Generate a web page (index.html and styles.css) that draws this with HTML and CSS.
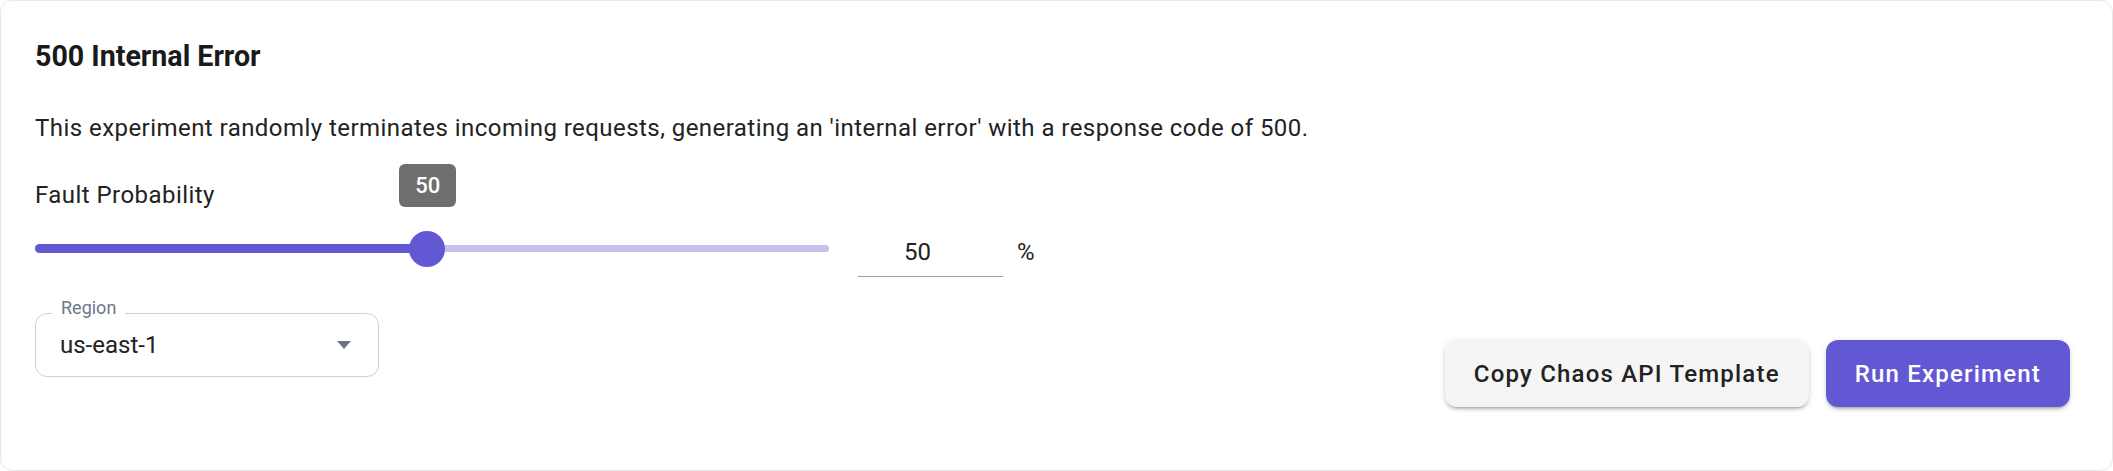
FILE: index.html
```html
<!DOCTYPE html>
<html lang="en">
<head>
<meta charset="utf-8">
<title>500 Internal Error</title>
<link rel="stylesheet" href="styles.css">
</head>
<body>
<div class="card">
  <h2 class="title">500 Internal Error</h2>
  <p class="desc">This experiment randomly terminates incoming requests, generating an 'internal error' with a response code of 500.</p>
  <div class="field-label">Fault Probability</div>
  <div class="slider-row">
    <div class="slider">
      <div class="rail"></div>
      <div class="track" style="width: 49.4%"></div>
      <div class="thumb" style="left: 49.4%"></div>
      <div class="value-label" style="left: 49.4%">50</div>
    </div>
    <div class="value-field">
      <input class="value-input" type="text" value="50">
      <span class="unit">%</span>
    </div>
  </div>
  <div class="bottom-row">
    <div class="select">
      <span class="select-label">Region</span>
      <span class="select-value">us-east-1</span>
      <svg class="select-arrow" width="14" height="8" viewBox="0 0 14 8"><path d="M0 0H14L7 8Z" fill="#6b7785"/></svg>
    </div>
    <div class="actions">
      <button class="btn btn-secondary">Copy Chaos API Template</button>
      <button class="btn btn-primary">Run Experiment</button>
    </div>
  </div>
</div>
</body>
</html>
```
FILE: styles.css
```css
html, body {
  margin: 0;
  padding: 0;
  background: #ffffff;
}

body {
  font-family: Roboto, "Liberation Sans", Arial, sans-serif;
  color: #222222;
}

.card {
  box-sizing: border-box;
  width: 2113px;
  height: 471px;
  border: 1px solid #e8e8e8;
  border-radius: 12px;
  padding: 38px 42px 0 34px;
  overflow: hidden;
}

.title {
  margin: 0;
  font-size: 28.6px;
  line-height: 34px;
  font-weight: 700;
  color: #1a1a1a;
}

.desc {
  margin: 39px 0 0;
  font-size: 24px;
  line-height: 32px;
  letter-spacing: 0.45px;
  color: #222222;
}

.field-label {
  margin-top: 35px;
  font-size: 24px;
  line-height: 32px;
  letter-spacing: 0.45px;
  color: #222222;
}

.slider-row {
  display: flex;
  align-items: flex-start;
  gap: 29px;
}

.slider {
  position: relative;
  width: 794px;
  height: 36px;
  margin-top: 20px;
}

.rail {
  position: absolute;
  left: 0;
  right: 0;
  top: 14px;
  height: 7px;
  border-radius: 4px;
  background: #c5c0ef;
}

.track {
  position: absolute;
  left: 0;
  top: 13px;
  height: 9px;
  border-radius: 5px;
  background: #6358d3;
}

.thumb {
  position: absolute;
  top: 0;
  width: 36px;
  height: 36px;
  margin-left: -18px;
  border-radius: 50%;
  background: #6358d3;
}

.value-label {
  position: absolute;
  bottom: 60px;
  width: 57px;
  height: 43px;
  margin-left: -28px;
  display: flex;
  align-items: center;
  justify-content: center;
  background: #6e6e6e;
  color: #ffffff;
  border-radius: 6px;
  font-size: 22px;
  font-weight: 500;
}

.value-field {
  display: flex;
  align-items: baseline;
  gap: 14px;
  margin-top: 21px;
}

.value-input {
  box-sizing: border-box;
  width: 145px;
  height: 45px;
  margin: 0;
  padding: 4px 0 8px 46px;
  border: none;
  border-bottom: 1px solid #9e9e9e;
  outline: none;
  background: transparent;
  font-family: Roboto, "Liberation Sans", Arial, sans-serif;
  font-size: 24px;
  line-height: 32px;
  color: #222222;
}

.unit {
  font-size: 24px;
  line-height: 32px;
  color: #222222;
}

.bottom-row {
  display: flex;
  justify-content: space-between;
  align-items: flex-start;
  margin-top: 36px;
}

.select {
  position: relative;
  box-sizing: border-box;
  width: 344px;
  height: 64px;
  border: 1px solid #cdd0d4;
  border-radius: 12px;
  padding: 0 27px 0 24px;
  display: flex;
  align-items: center;
  justify-content: space-between;
}

.select-label {
  position: absolute;
  left: 16px;
  top: -16px;
  padding: 0 9px;
  background: #ffffff;
  font-size: 18px;
  line-height: 20px;
  color: #6e7887;
}

.select-value {
  font-size: 24px;
  line-height: 32px;
  color: #222222;
}

.select-arrow {
  display: block;
}

.actions {
  display: flex;
  gap: 17px;
  margin-top: 27px;
}

.btn {
  height: 67px;
  padding: 0 29px;
  border: none;
  border-radius: 12px;
  font-family: Roboto, "Liberation Sans", Arial, sans-serif;
  font-size: 24px;
  font-weight: 500;
  letter-spacing: 1.2px;
  cursor: pointer;
  box-shadow: 0 4px 2px -3px rgba(0,0,0,0.2), 0 3px 3px 0 rgba(0,0,0,0.12), 0 1px 7px 0 rgba(0,0,0,0.1);
}

.btn-secondary {
  background: #f5f5f5;
  color: #222222;
}

.btn-primary {
  background: #6358d3;
  color: #ffffff;
}
```
